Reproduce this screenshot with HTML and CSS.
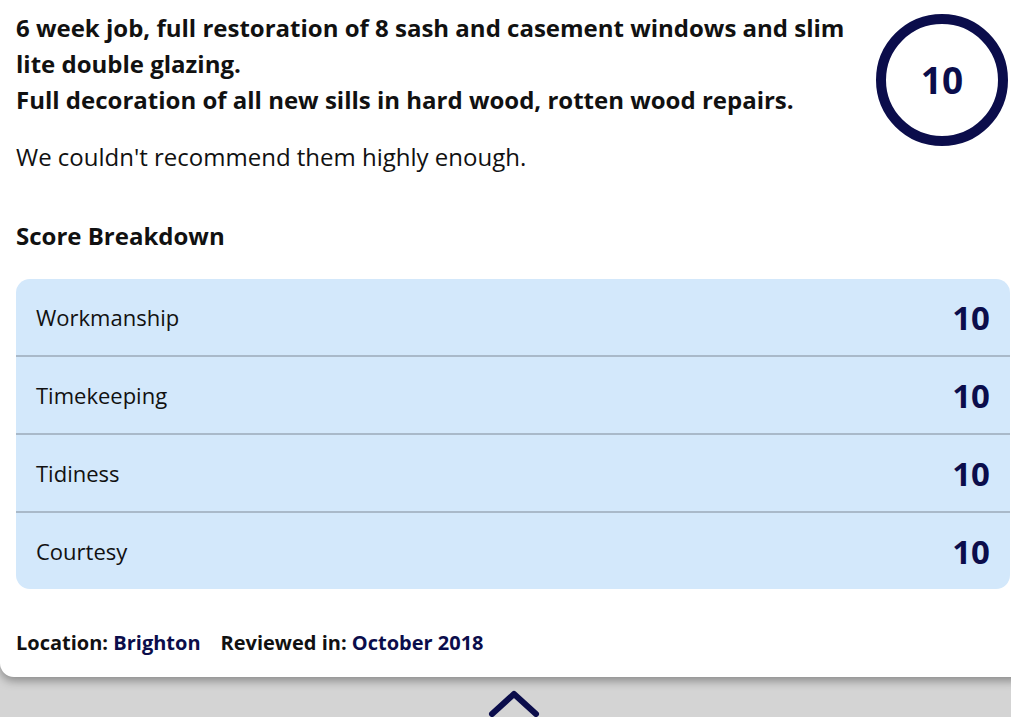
FILE: index.html
```html
<!DOCTYPE html>
<html>
<head>
<meta charset="utf-8">
<link rel="stylesheet" href="styles.css">
</head>
<body>
<div class="page">
  <div class="card">
    <div class="top">
      <div class="review">
        <p class="title">6 week job, full restoration of 8 sash and casement windows and slim lite double glazing.<br>Full decoration of all new sills in hard wood, rotten wood repairs.</p>
        <p class="body-text">We couldn't recommend them highly enough.</p>
      </div>
      <div class="score-ring">10</div>
    </div>
    <h3 class="breakdown-title">Score Breakdown</h3>
    <div class="breakdown">
      <div class="row"><span class="label">Workmanship</span><span class="val">10</span></div>
      <div class="row"><span class="label">Timekeeping</span><span class="val">10</span></div>
      <div class="row"><span class="label">Tidiness</span><span class="val">10</span></div>
      <div class="row"><span class="label">Courtesy</span><span class="val">10</span></div>
    </div>
    <div class="meta">
      <span class="meta-item">Location: <span class="hl">Brighton</span></span>
      <span class="meta-item">Reviewed in: <span class="hl">October 2018</span></span>
    </div>
  </div>
  <div class="toggle">
    <svg width="52" height="30" viewBox="0 0 52 30"><polyline points="4,24 26,4 48,24" fill="none" stroke="#0b0d4b" stroke-width="6" stroke-linecap="round" stroke-linejoin="round"/></svg>
  </div>
</div>
</body>
</html>
```
FILE: styles.css
```css
html, body {
  margin: 0;
  padding: 0;
  overflow: hidden;
}
body {
  background: #d4d4d4;
  font-family: "Open Sans", "Liberation Sans", sans-serif;
  color: #111;
  width: 1011px;
  height: 717px;
}
.page {
  width: 1011px;
  height: 717px;
  overflow: hidden;
}
.card {
  background: #fff;
  width: 1027px;
  box-sizing: border-box;
  padding: 10px 16px 0 16px;
  border-radius: 0 0 14px 14px;
  box-shadow: 0 4px 10px rgba(0,0,0,0.35);
  height: 677px;
  position: relative;
}
.top {
  display: flex;
  align-items: flex-start;
}
.review {
  width: 850px;
}
.title {
  margin: 0;
  font-weight: 700;
  font-size: 24px;
  line-height: 36px;
  color: #111;
}
.body-text {
  margin: 21px 0 0 0;
  font-size: 24px;
  line-height: 36px;
  color: #111;
}
.score-ring {
  margin-left: 10px;
  margin-top: 4px;
  width: 132px;
  height: 132px;
  box-sizing: border-box;
  border: 10px solid #0b0d4b;
  border-radius: 50%;
  display: flex;
  align-items: center;
  justify-content: center;
  font-weight: 700;
  font-size: 37px;
  color: #0b0d4b;
  padding-bottom: 2px;
}
.breakdown-title {
  margin: 43px 0 0 0;
  font-size: 24px;
  line-height: 36px;
  font-weight: 700;
  color: #111;
}
.breakdown {
  margin-top: 25px;
  width: 994px;
  background: #d3e8fb;
  border-radius: 14px;
}
.row {
  display: flex;
  justify-content: space-between;
  align-items: center;
  height: 76px;
  padding: 0 20px;
  border-top: 2px solid #a9b9c9;
}
.row:first-child {
  border-top: none;
}
.label {
  font-size: 22px;
  color: #111;
}
.val {
  font-size: 33px;
  font-weight: 700;
  color: #0b0d4b;
}
.meta {
  margin-top: 40px;
  display: flex;
  gap: 20px;
  font-size: 20px;
  font-weight: 700;
  color: #111;
  line-height: 28px;
}
.hl {
  color: #0b0d4b;
}
.toggle {
  display: flex;
  justify-content: flex-start;
  padding-left: 488px;
  padding-top: 13px;
}
.toggle svg {
  display: block;
}
```
